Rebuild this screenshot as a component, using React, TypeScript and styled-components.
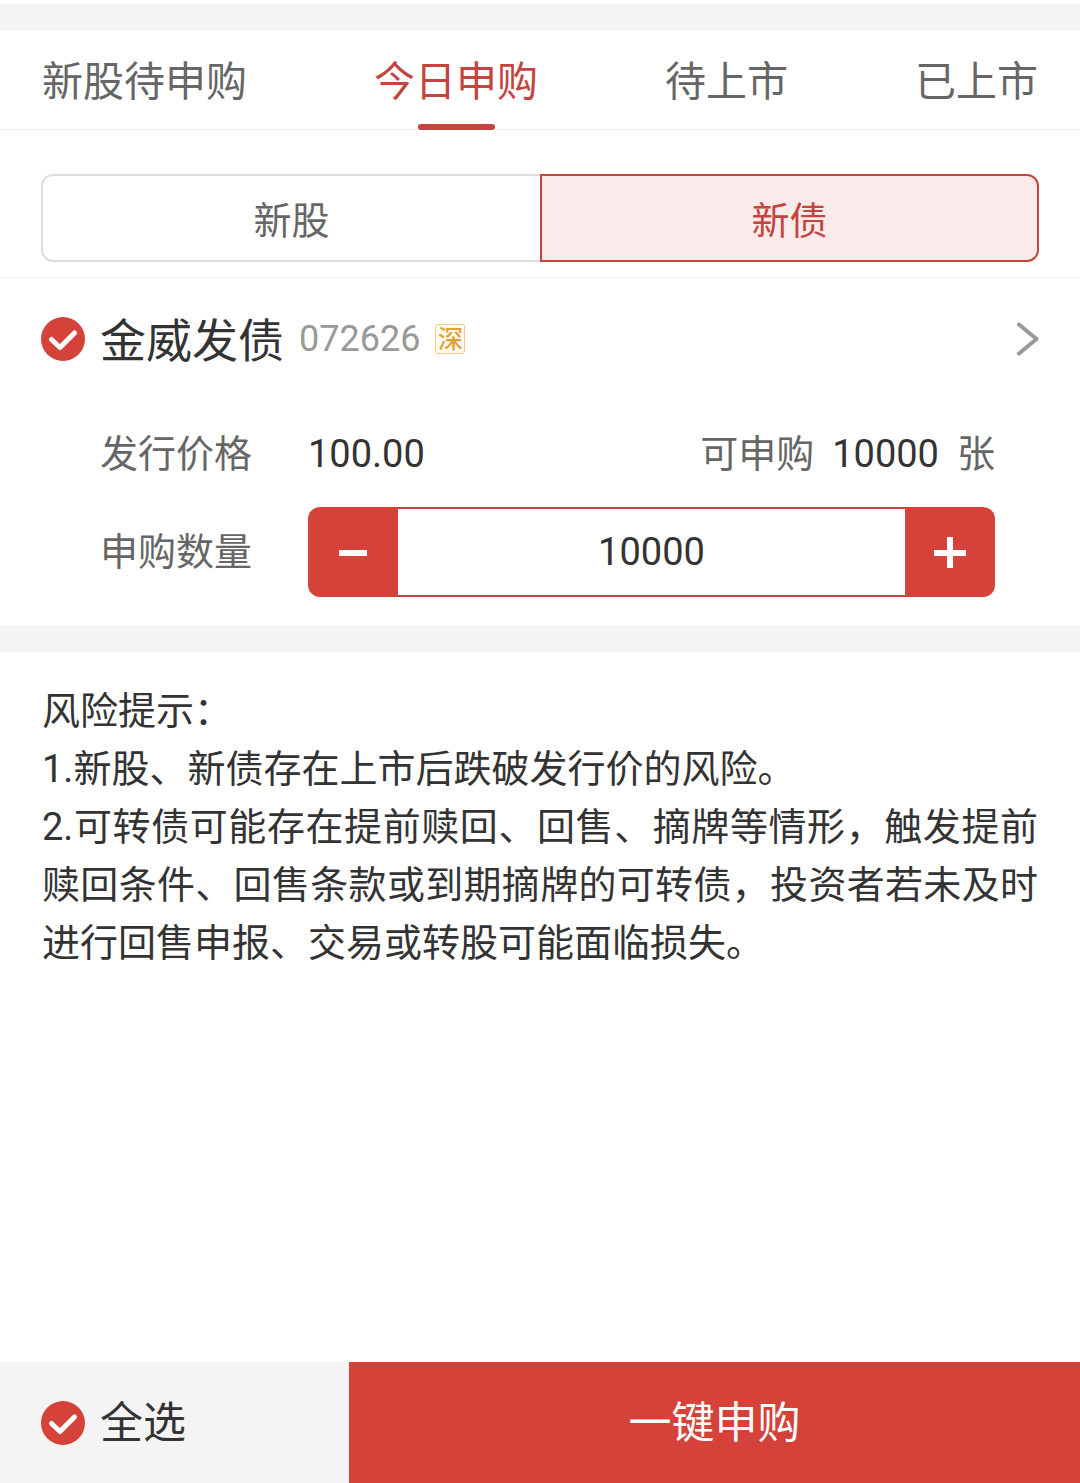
import React, { useState } from "react";
import styled, { createGlobalStyle } from "styled-components";

const red = "#d5423a";
const redLine = "#c4443f";
const ink = "#333333";
const muted = "#666666";
const pale = "#f4f4f4";
const hairline = "#eeeeee";

const GlobalStyle = createGlobalStyle`
  *, *::before, *::after { box-sizing: border-box; }
  body {
    margin: 0;
    background: #ffffff;
    color: ${ink};
    font-family: "Roboto", "Noto Sans CJK SC", sans-serif;
    font-size: 38px;
    line-height: 58px;
  }
  button, input {
    margin: 0;
    padding: 0;
    border: 0;
    border-radius: 0;
    background: none;
    color: inherit;
    font: inherit;
  }
  button { cursor: pointer; }
`;

const Page = styled.div`
  display: flex;
  flex-direction: column;
  min-height: 100vh;
  padding-top: 4px;
`;

const Band = styled.div`
  height: 27px;
  background: ${pale};
`;

const Tabs = styled.nav`
  display: flex;
  justify-content: space-between;
  height: 99px;
  padding: 0 42px;
  border-bottom: 1px solid ${hairline};
`;

const Tab = styled.button<{ $active: boolean }>`
  position: relative;
  padding-top: 4px;
  color: ${(p) => (p.$active ? redLine : muted)};
  font-size: 41px;

  &::after {
    content: "";
    display: ${(p) => (p.$active ? "block" : "none")};
    position: absolute;
    left: 50%;
    bottom: -1px;
    width: 77px;
    height: 6px;
    margin-left: -38px;
    border-radius: 3px;
    background: ${redLine};
  }
`;

const SegmentBar = styled.div`
  display: grid;
  grid-template-columns: 1fr 1fr;
  padding: 44px 41px 15px;
  border-bottom: 1px solid ${hairline};
`;

const Segment = styled.button<{ $active: boolean }>`
  height: 88px;
  padding-top: 6px;
  border: 2px solid ${(p) => (p.$active ? redLine : "#dddddd")};
  background: ${(p) => (p.$active ? "#faebea" : "#ffffff")};
  color: ${(p) => (p.$active ? redLine : muted)};

  &:first-child {
    border-radius: 12px 0 0 12px;
    border-right-width: ${(p) => (p.$active ? "2px" : "0")};
  }
  &:last-child {
    border-radius: 0 12px 12px 0;
    border-left-width: ${(p) => (p.$active ? "2px" : "0")};
  }
`;

const Bond = styled.section`
  padding: 0 41px 28px;
`;

const BondHead = styled.div`
  display: flex;
  align-items: center;
  gap: 15px;
  height: 122px;
`;

const CheckLabel = styled.label`
  display: flex;
  align-items: center;
  gap: 15px;
  position: relative;
  cursor: pointer;
`;

const CheckInput = styled.input`
  position: absolute;
  width: 44px;
  height: 44px;
  opacity: 0;
  cursor: pointer;
`;

const BondName = styled.span`
  padding-top: 4px;
  font-size: 46px;
`;

const BondCode = styled.span`
  color: #999999;
  font-size: 36px;
`;

const Market = styled.span`
  width: 30px;
  height: 30px;
  border: 1px solid #eccb8c;
  border-radius: 3px;
  background: #fffaf0;
  color: #dfa136;
  font-size: 25px;
  font-weight: 500;
  line-height: 30px;
  text-align: center;
`;

const DetailButton = styled.button`
  display: flex;
  margin-left: auto;
`;

const Details = styled.div`
  display: grid;
  grid-template-columns: 208px 1fr;
  align-items: center;
  padding: 0 44px 0 59px;
`;

const Caption = styled.label`
  color: ${muted};
`;

const PriceRow = styled.div`
  display: flex;
  align-items: center;
  justify-content: space-between;
  height: 107px;
`;

const Available = styled.div`
  display: flex;
  align-items: center;
  gap: 18px;
  color: ${muted};

  strong {
    color: ${ink};
    font-weight: 400;
  }
`;

const Stepper = styled.div`
  display: flex;
  height: 90px;
  border-radius: 12px;
  overflow: hidden;
`;

const StepButton = styled.button`
  display: flex;
  align-items: center;
  justify-content: center;
  flex: 0 0 90px;
  background: ${red};
`;

const Quantity = styled.input`
  flex: 1;
  min-width: 0;
  border: solid ${redLine};
  border-width: 2px 0;
  text-align: center;
  outline: none;
`;

const Risk = styled.section`
  flex: 1;
  padding: 30px 42px;
  text-align: justify;

  p { margin: 0; }
`;

const Footer = styled.footer`
  display: grid;
  grid-template-columns: 349px 1fr;
  height: 121px;
  background: ${pale};
  font-size: 43px;
`;

const SelectAll = styled.div`
  display: flex;
  padding-left: 41px;
`;

const Submit = styled.button`
  background: ${red};
  color: #ffffff;
`;

function Check({ checked, onChange, label, children }: {
  checked: boolean;
  onChange: (v: boolean) => void;
  label: string;
  children: React.ReactNode;
}) {
  return (
    <CheckLabel>
      <CheckInput type="checkbox" aria-label={label} checked={checked} onChange={(e) => onChange(e.target.checked)} />
      <svg width="44" height="44" viewBox="0 0 44 44" fill="none" aria-hidden="true">
        {checked ? (
          <>
            <circle cx="22" cy="22" r="22" fill={red} />
            <path d="M10.5 22.5 19 30.5 33.5 16" stroke="#ffffff" strokeWidth="5" strokeLinecap="round" strokeLinejoin="round" />
          </>
        ) : (
          <circle cx="22" cy="22" r="21" stroke="#cccccc" strokeWidth="2" />
        )}
      </svg>
      {children}
    </CheckLabel>
  );
}

const tabs = ["新股待申购", "今日申购", "待上市", "已上市"];
const segments = ["新股", "新债"];

export default function App() {
  const [tab, setTab] = useState(1);
  const [segment, setSegment] = useState(1);
  const [checked, setChecked] = useState(true);
  const [quantity, setQuantity] = useState(10000);
  const change = (n: number) => setQuantity(Math.max(0, Math.min(10000, n || 0)));

  return (
    <Page>
      <GlobalStyle />
      <Band />
      <Tabs>
        {tabs.map((name, i) => (
          <Tab key={name} type="button" $active={i === tab} onClick={() => setTab(i)}>{name}</Tab>
        ))}
      </Tabs>
      <SegmentBar>
        {segments.map((name, i) => (
          <Segment key={name} type="button" $active={i === segment} onClick={() => setSegment(i)}>{name}</Segment>
        ))}
      </SegmentBar>

      <Bond>
        <BondHead>
          <Check checked={checked} onChange={setChecked} label="金威发债">
            <BondName>金威发债</BondName>
          </Check>
          <BondCode>072626</BondCode>
          <Market>深</Market>
          <DetailButton type="button" aria-label="详情">
            <svg width="24" height="36" viewBox="0 0 24 36" fill="none" aria-hidden="true">
              <path d="M4 3.5 21.5 18 4 32.5" stroke="#999999" strokeWidth="4" strokeLinecap="round" strokeLinejoin="round" />
            </svg>
          </DetailButton>
        </BondHead>
        <Details>
          <Caption as="span">发行价格</Caption>
          <PriceRow>
            <span>100.00</span>
            <Available>
              <span>可申购</span>
              <strong>10000</strong>
              <span>张</span>
            </Available>
          </PriceRow>
          <Caption htmlFor="quantity">申购数量</Caption>
          <Stepper>
            <StepButton type="button" aria-label="减少" onClick={() => change(quantity - 10)}>
              <svg width="32" height="32" viewBox="0 0 32 32" aria-hidden="true">
                <path d="M2 14H30V20H2Z" fill="#ffffff" />
              </svg>
            </StepButton>
            <Quantity id="quantity" inputMode="numeric" value={quantity} onChange={(e) => change(Number(e.target.value))} />
            <StepButton type="button" aria-label="增加" onClick={() => change(quantity + 10)}>
              <svg width="32" height="32" viewBox="0 0 32 32" aria-hidden="true">
                <path d="M13 1H19V14H32V20H19V32H13V20H0V14H13Z" fill="#ffffff" />
              </svg>
            </StepButton>
          </Stepper>
        </Details>
      </Bond>
      <Band />

      <Risk>
        <p>风险提示：</p>
        <p>1.新股、新债存在上市后跌破发行价的风险。</p>
        <p>2.可转债可能存在提前赎回、回售、摘牌等情形，触发提前赎回条件、回售条款或到期摘牌的可转债，投资者若未及时进行回售申报、交易或转股可能面临损失。</p>
      </Risk>

      <Footer>
        <SelectAll>
          <Check checked={checked} onChange={setChecked} label="全选">
            <span>全选</span>
          </Check>
        </SelectAll>
        <Submit type="button">一键申购</Submit>
      </Footer>
    </Page>
  );
}
